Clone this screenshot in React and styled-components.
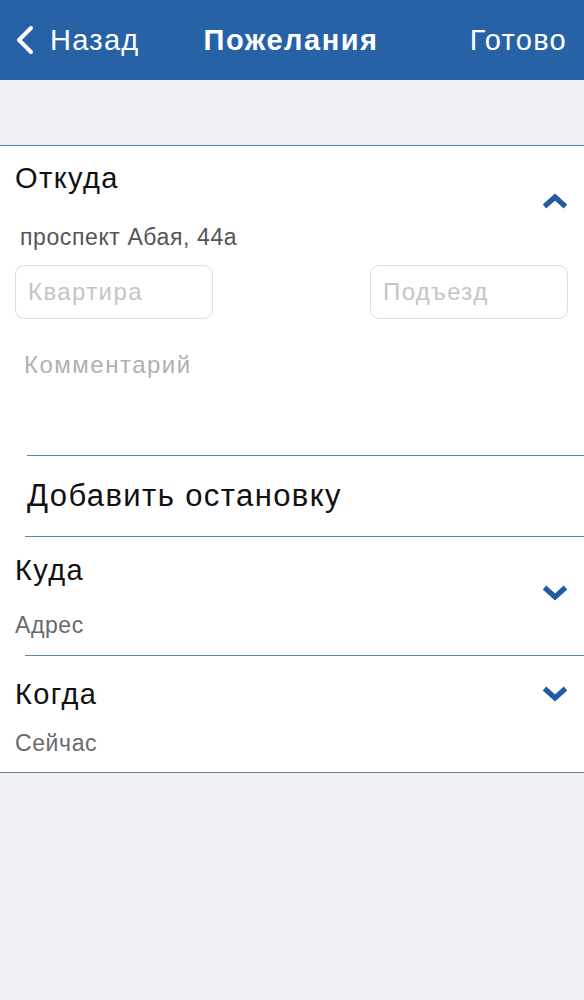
import React from 'react';
import styled, {createGlobalStyle} from 'styled-components';

const GlobalStyle = createGlobalStyle`
  html, body {
    margin: 0;
    padding: 0;
    background: #efeff4;
    font-family: "Liberation Sans", Arial, sans-serif;
  }
`;

const Screen = styled.div`
  width: 584px;
  min-height: 1000px;
  background: #efeff4;
`;

const NavBar = styled.div`
  height: 80px;
  background: #2862a6;
  display: grid;
  grid-template-columns: 1fr auto 1fr;
  align-items: center;
  padding: 0 17px 0 15px;
  color: #fff;
`;

const NavButton = styled.div`
  display: flex;
  align-items: center;
  gap: 15px;
  font-size: 29px;
  letter-spacing: 1.3px;
  justify-self: ${p => (p.$right ? 'end' : 'start')};
`;

const NavTitle = styled.div`
  font-size: 29px;
  font-weight: bold;
  letter-spacing: 1.5px;
`;

const Spacer = styled.div`
  height: 65px;
  border-bottom: 1px solid #5c80b2;
`;

const Panel = styled.div`
  background: #fff;
  border-bottom: 1px solid #5c80b2;
`;

const Section = styled.div`
  display: flex;
  align-items: flex-start;
  padding: ${p => p.$pad || '0 16px 0 15px'};
`;

const SectionText = styled.div`
  flex: 1;
  display: flex;
  flex-direction: column;
`;

const Heading = styled.div`
  font-size: 29px;
  letter-spacing: 1.4px;
  color: #111;
  line-height: 34px;
`;

const SubText = styled.div`
  font-size: 23px;
  letter-spacing: 0.6px;
  color: ${p => p.$color || '#6a6a6a'};
  line-height: 28px;
  margin-top: ${p => p.$gap || 0}px;
  padding-left: ${p => p.$indent || 0}px;
`;

const ChevronBox = styled.div`
  margin-top: ${p => p.$top}px;
  display: flex;
`;

const Fields = styled.div`
  display: flex;
  justify-content: space-between;
  padding: 0 16px 0 15px;
  margin-top: 14px;
`;

const Field = styled.div`
  width: 198px;
  height: 54px;
  box-sizing: border-box;
  border: 1px solid #dedede;
  border-radius: 9px;
  display: flex;
  align-items: center;
  padding-left: 12px;
  font-size: 24px;
  letter-spacing: 1.4px;
  color: #c4c4c8;
`;

const Comment = styled.div`
  height: 136px;
  box-sizing: border-box;
  padding: 32px 0 0 24px;
  font-size: 24px;
  line-height: 28px;
  letter-spacing: 1.5px;
  color: #b0b0b4;
`;

const Divider = styled.div`
  height: 1px;
  margin-left: ${p => p.$inset || 0}px;
  background: #5c80b2;
`;

const AddStop = styled.div`
  height: 80px;
  display: flex;
  align-items: center;
  padding-left: 27px;
  font-size: 31px;
  letter-spacing: 1.4px;
  color: #111;
`;

const Chevron = ({up}) => (
  <svg width="26" height="16" viewBox="0 0 26 16">
    <path
      d={up ? 'M2.5 13.5 L13 4 L23.5 13.5' : 'M2.5 2.5 L13 12 L23.5 2.5'}
      fill="none"
      stroke="#1f5ca4"
      strokeWidth="5.2"
    />
  </svg>
);

const BackArrow = () => (
  <svg width="20" height="30" viewBox="0 0 20 30">
    <path
      d="M16 3 L4 15 L16 27"
      fill="none"
      stroke="#fff"
      strokeWidth="4"
      strokeLinecap="round"
      strokeLinejoin="round"
    />
  </svg>
);

export default function App() {
  return (
    <Screen>
      <GlobalStyle />
      <NavBar>
        <NavButton>
          <BackArrow />
          Назад
        </NavButton>
        <NavTitle>Пожелания</NavTitle>
        <NavButton $right>Готово</NavButton>
      </NavBar>
      <Spacer />
      <Panel>
        {/* Откуда */}
        <Section $pad="15px 16px 0 15px">
          <SectionText>
            <Heading>Откуда</Heading>
            <SubText $color="#555" $gap={28} $indent={5}>
              проспект Абая, 44а
            </SubText>
          </SectionText>
          <ChevronBox $top={32}>
            <Chevron up />
          </ChevronBox>
        </Section>
        <Fields>
          <Field>Квартира</Field>
          <Field>Подъезд</Field>
        </Fields>
        <Comment>Комментарий</Comment>
        <Divider $inset={27} />
        <AddStop>Добавить остановку</AddStop>
        <Divider $inset={25} />
        {/* Куда */}
        <Section $pad="16px 16px 16px 15px">
          <SectionText>
            <Heading>Куда</Heading>
            <SubText $gap={24}>Адрес</SubText>
          </SectionText>
          <ChevronBox $top={32}>
            <Chevron />
          </ChevronBox>
        </Section>
        <Divider $inset={25} />
        {/* Когда */}
        <Section $pad="21px 16px 15px 15px">
          <SectionText>
            <Heading>Когда</Heading>
            <SubText $gap={18}>Сейчас</SubText>
          </SectionText>
          <ChevronBox $top={9}>
            <Chevron />
          </ChevronBox>
        </Section>
      </Panel>
    </Screen>
  );
}
